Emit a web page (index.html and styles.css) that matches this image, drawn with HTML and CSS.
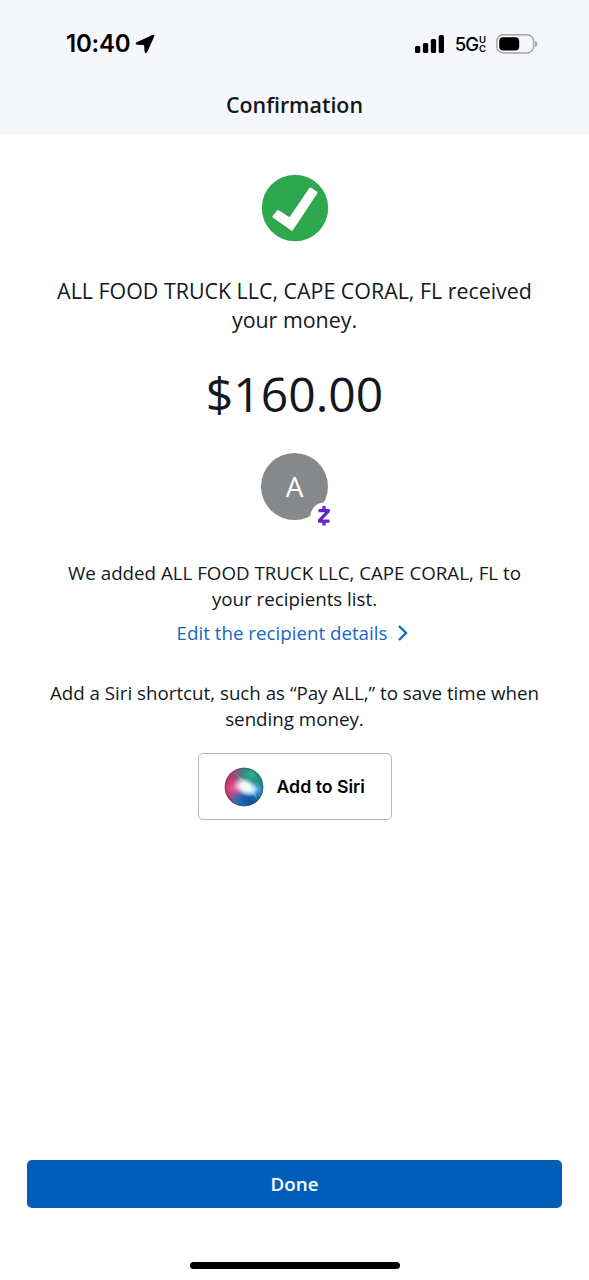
FILE: index.html
```html
<!DOCTYPE html>
<html lang="en">
<head>
<meta charset="utf-8">
<title>Confirmation</title>
<link rel="stylesheet" href="styles.css">
</head>
<body>
<div class="screen">
  <header class="header">
    <div class="status">
      <div class="clock">
        <span class="time">10:40</span>
        <svg class="location" width="20" height="20" viewBox="0 0 20 20"><path d="M17.400 1Q20.200 0 19.100 2.700L12.400 17.800Q10.300 20.600 9.500 17.500L9.200 12Q9.100 11.100 8.200 11L2.300 10.800Q-.8 9.900 1.800 8.200Z"/></svg>
      </div>
      <div class="signals">
        <svg class="bars" width="29" height="20" viewBox="0 0 29 20"><rect x="0" y="12" width="5.300" height="7" rx="1.600"/><rect x="7.900" y="9" width="5.300" height="10" rx="1.600"/><rect x="15.800" y="5" width="5.300" height="14" rx="1.600"/><rect x="23.700" y="1" width="5.300" height="18" rx="1.600"/></svg>
        <span class="network">5G</span>
        <span class="band"><span>U</span><span>C</span></span>
        <svg class="battery" width="42" height="20" viewBox="0 0 42 20"><rect x="0.800" y="0.800" width="36.800" height="18.200" rx="6.500" fill="none" stroke="#a2a4a8" stroke-width="1.400"/><rect x="3.200" y="3.200" width="20" height="13.400" rx="4"/><path d="M39 6.800Q41.400 7.600 41.400 9.900Q41.400 12.200 39 13Z" fill="#a2a4a8"/></svg>
      </div>
    </div>
    <h1 class="title">Confirmation</h1>
  </header>
  <main class="content">
    <svg class="success" width="68" height="68" viewBox="0 0 68 68"><circle cx="34" cy="34" r="33.200" fill="#2da84f"/><path d="M11.900 41.400 16.200 36.600Q17 35.700 18.100 36.400L28.600 43.300 48.200 14.300Q49.100 13 50.400 13.900L55.800 17.500Q57 18.400 56.200 19.600L32 56Q31.100 57.300 29.900 56.200L12.100 43.800Q10.800 42.700 11.900 41.400Z" fill="#fff"/></svg>
    <p class="received">ALL FOOD TRUCK LLC, CAPE CORAL, FL received<br>your money.</p>
    <p class="amount">$160.00</p>
    <div class="avatar">
      <span class="initial">A</span>
      <svg class="badge" width="28" height="28" viewBox="0 0 28 28"><circle cx="14" cy="14" r="13.500" fill="#fff"/><path d="M8.500 8.700H18.200V9.300L9.700 18.200V19.100H19.500M14 4V8.500M14 19V23.500" fill="none" stroke="#6a22d0" stroke-width="3.200"/></svg>
    </div>
    <p class="note added">We added ALL FOOD TRUCK LLC, CAPE CORAL, FL to<br>your recipients list.</p>
    <a class="link">Edit the recipient details<svg class="chevron" width="12" height="18" viewBox="0 0 12 18"><path d="M2 2 9 9 2 16" fill="none" stroke="#1768bf" stroke-width="2.400"/></svg></a>
    <p class="note shortcut">Add a Siri shortcut, such as “Pay ALL,” to save time when<br>sending money.</p>
    <button class="siri">
      <svg class="orb" width="40" height="40" viewBox="0 0 40 40">
        <defs>
          <linearGradient id="base" x1="0" y1=".45" x2="1" y2=".55"><stop offset="0" stop-color="#d92b66"/><stop offset=".3" stop-color="#a04d78"/><stop offset=".6" stop-color="#34707a"/><stop offset="1" stop-color="#178a78"/></linearGradient>
          <radialGradient id="green" cx=".68" cy=".18" r=".45"><stop offset="0" stop-color="#2bb58c"/><stop offset="1" stop-color="#1d8e78" stop-opacity="0"/></radialGradient>
          <radialGradient id="blue" cx=".65" cy=".87" r=".55"><stop offset="0" stop-color="#0d4f9c"/><stop offset=".6" stop-color="#1c72b8" stop-opacity=".8"/><stop offset="1" stop-color="#1c72b8" stop-opacity="0"/></radialGradient>
          <radialGradient id="pink"><stop offset="0" stop-color="#f56bb0"/><stop offset="1" stop-color="#e43b82" stop-opacity="0"/></radialGradient>
          <radialGradient id="sky"><stop offset="0" stop-color="#7fd0fa"/><stop offset="1" stop-color="#45a8ed" stop-opacity="0"/></radialGradient>
          <radialGradient id="glow"><stop offset="0" stop-color="#fff"/><stop offset=".4" stop-color="#fff" stop-opacity=".9"/><stop offset="1" stop-color="#fff" stop-opacity="0"/></radialGradient>
          <clipPath id="disc"><circle cx="20" cy="20" r="18.700"/></clipPath>
        </defs>
        <circle cx="20" cy="20" r="19.300" fill="url(#base)"/>
        <circle cx="20" cy="20" r="19.300" fill="url(#green)"/>
        <circle cx="20" cy="20" r="19.300" fill="url(#blue)"/>
        <g clip-path="url(#disc)">
          <ellipse cx="11" cy="21" rx="12" ry="10" fill="url(#pink)"/>
          <ellipse cx="30" cy="22" rx="11" ry="9" fill="url(#sky)"/>
          <path d="M12 7Q20 11 24 20Q17 15 12 7ZM23 19Q32 23 33 32Q27 26 23 19Z" fill="#fff" opacity=".2"/>
          <ellipse cx="21.500" cy="20" rx="13" ry="9" transform="rotate(28 21.500 20)" fill="url(#glow)"/>
        </g>
        <circle cx="20" cy="20" r="18.600" fill="none" stroke="#27405a" stroke-width="1.400" opacity=".35"/>
      </svg>
      <span class="siri-label">Add to Siri</span>
    </button>
  </main>
  <footer class="footer">
    <button class="done">Done</button>
    <div class="home"></div>
  </footer>
</div>
</body>
</html>
```
FILE: styles.css
```css
* { box-sizing: border-box; }
body { margin: 0; background: #fff; color: #12181d; font-family: "Open Sans", "Noto Sans", sans-serif; }
p, h1 { margin: 0; font-weight: 400; white-space: nowrap; text-align: center; }
svg { display: block; flex: none; }
button { font: inherit; padding: 0; }
.screen { height: 1280px; display: flex; flex-direction: column; overflow: hidden; }
.header { height: 135px; background: #f5f7fb; padding-top: 32px; }
.status { height: 24px; padding: 0 51px 0 66px; display: flex; align-items: center; justify-content: space-between; font-family: Inter, "Liberation Sans", sans-serif; color: #000; }
.clock, .signals { display: flex; align-items: center; }
.time { font-size: 24px; font-weight: 600; line-height: 24px; letter-spacing: -0.2px; }
.location { margin-left: 5px; }
.network { font-size: 18.500px; font-weight: 500; line-height: 24px; letter-spacing: -1px; margin-left: 11px; }
.band { display: flex; flex-direction: column; width: 9px; font-size: 9.500px; font-weight: 600; line-height: 9px; margin-left: 1px; }
.battery { margin-left: 8px; }
.title { margin-top: 34px; font-size: 21.400px; font-weight: 600; line-height: 30px; }
.content { flex: 1; display: flex; flex-direction: column; align-items: center; }
.success { margin-top: 39px; }
.received { margin-top: 34px; font-size: 21.400px; line-height: 29px; }
.amount { margin-top: 30px; font-size: 48px; line-height: 60px; }
.avatar { position: relative; margin-top: 29px; width: 67px; height: 67px; border-radius: 50%; background: #86898b; color: #fff; display: flex; align-items: center; justify-content: center; }
.initial { font-size: 28px; line-height: 38px; margin-bottom: 2px; }
.badge { position: absolute; left: 49px; top: 49px; }
.note { font-size: 18.740px; line-height: 25.500px; }
.added { margin-top: 40px; }
.link { margin-top: 9px; margin-right: 3px; display: flex; align-items: center; color: #1768bf; font-size: 18.740px; line-height: 26px; white-space: nowrap; }
.chevron { margin-left: 10px; }
.shortcut { margin-top: 34px; }
.siri { margin-top: 22px; width: 194px; height: 67px; border: 1.500px solid #b5b7b9; border-radius: 5px; background: #fff; color: #000; display: flex; align-items: center; padding-left: 25px; }
.siri-label { margin-left: 13px; font-family: Inter, "Liberation Sans", sans-serif; font-size: 17.700px; font-weight: 600; white-space: nowrap; }
.footer { height: 121px; padding: 0 27px; display: flex; flex-direction: column; align-items: center; }
.done { margin-top: 1px; width: 100%; height: 48px; border: 0; border-radius: 5px; background: #005eb8; color: #fff; font-size: 18.740px; font-weight: 600; line-height: 26px; }
.home { margin-top: 54px; width: 210px; height: 7px; border-radius: 4px; background: #000; }
```
